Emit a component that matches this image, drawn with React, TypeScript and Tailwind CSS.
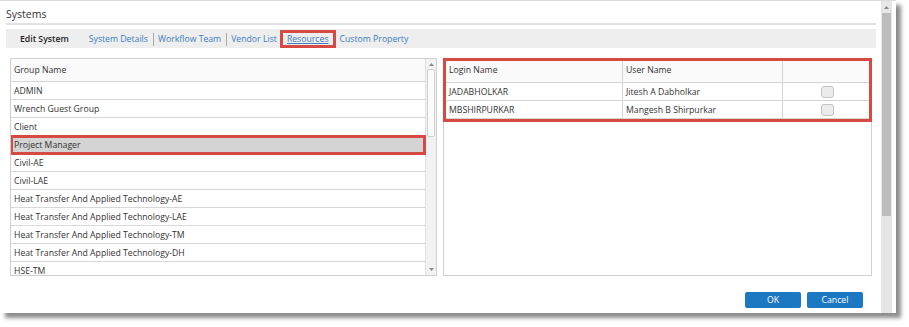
import React from 'react';

const groups = [
  'ADMIN',
  'Wrench Guest Group',
  'Client',
  'Project Manager',
  'Civil-AE',
  'Civil-LAE',
  'Heat Transfer And Applied Technology-AE',
  'Heat Transfer And Applied Technology-LAE',
  'Heat Transfer And Applied Technology-TM',
  'Heat Transfer And Applied Technology-DH',
  'HSE-TM',
];

const users = [
  { login: 'JADABHOLKAR', name: 'Jitesh A Dabholkar' },
  { login: 'MBSHIRPURKAR', name: 'Mangesh B Shirpurkar' },
];

const tabs = ['System Details', 'Workflow Team', 'Vendor List'];

const UpArrow = () => (
  <svg width="7" height="5" viewBox="0 0 7 5" className="mx-auto">
    <path d="M3.5 1 L6 4 L1 4 Z" fill="#8a8a8a" />
  </svg>
);

const DownArrow = () => (
  <svg width="7" height="5" viewBox="0 0 7 5" className="mx-auto">
    <path d="M1 1 L6 1 L3.5 4 Z" fill="#8a8a8a" />
  </svg>
);

const App = () => {
  return (
    <div className="w-[909px] h-[327px] bg-white" style={{ fontFamily: '"Open Sans", sans-serif' }}>
      <div className="w-[896px] h-[313px] bg-white border-t border-[#dcdcdc] shadow-[5px_5px_4px_rgba(0,0,0,0.45)] flex">
        {/* main content */}
        <div className="flex-1 pl-[6px] pr-[5px] flex flex-col">
          <div className="h-[24px] border-b-2 border-[#e2e2e2] flex items-center">
            <span className="text-[10.5px] text-[#333] leading-none pt-[5px]">Systems</span>
          </div>

          {/* tab bar */}
          <div className="mt-[4px] h-[19px] bg-[#eeeeee] flex items-center text-[8.7px] leading-none">
            <span className="ml-[14px] pt-[1px] text-[#1e1e1e] font-semibold">Edit System</span>
            <div className="ml-[20px] pt-[1px] flex items-center text-[#3b7bc0]">
              {tabs.map((t, i) => (
                <React.Fragment key={t}>
                  <span>{t}</span>
                  {i < tabs.length - 1 && <span className="ml-[5px] mr-[4px] w-px h-[13px] bg-[#a8a8a8]" />}
                </React.Fragment>
              ))}
            </div>
            <span className="ml-[3px] h-[18px] px-[7px] pt-[1px] flex items-center outline-[3px] outline-solid outline-[#d64a43] -outline-offset-[3px]">
              <span className="underline text-[#3b7bc0]">Resources</span>
            </span>
            <span className="ml-[4px] pt-[1px] text-[#3b7bc0]">Custom Property</span>
          </div>

          {/* panels */}
          <div className="mt-[10px] flex gap-[6px] pl-[4px] pr-[4px]">
            {/* left */}
            <div className="w-[427px] h-[218px] border border-[#d0d0d0] flex overflow-hidden">
              <div className="flex-1 text-[8.7px] text-[#333]">
                <div className="h-[23px] flex items-center pl-[3px] pt-[2px] border-b border-[#d8d8d8] bg-[#fafafa]">Group Name</div>
                {groups.map((g) =>
                  g === 'Project Manager' ? (
                    <div
                      key={g}
                      className="h-[18px] flex items-center pl-[3px] pt-[3px] bg-[#d4d4d4] border-b border-[#d8d8d8] outline-[3px] outline-solid outline-[#d64a43] -outline-offset-[2px] relative"
                    >
                      {g}
                    </div>
                  ) : (
                    <div key={g} className="h-[18px] flex items-center pl-[3px] pt-[3px] border-b border-[#d8d8d8]">
                      {g}
                    </div>
                  )
                )}
              </div>
              <div className="w-[11px] bg-[#f2f2f2] border-l border-[#e0e0e0] flex flex-col pt-[3px] pb-[3px]">
                <UpArrow />
                <div className="mt-[2px] mx-[1px] h-[68px] bg-[#fbfbfb] border border-[#cfcfcf] rounded-[2px]" />
                <div className="flex-1" />
                <DownArrow />
              </div>
            </div>

            {/* right */}
            <div className="flex-1 h-[218px] border border-[#d0d0d0] relative">
              <div className="outline-[3px] outline-solid outline-[#d64a43] -outline-offset-[2px] text-[8.7px] text-[#333] pb-[2px]">
                <div className="h-[24px] flex border-b border-[#d4d4d4] bg-[#fafafa]">
                  <div className="w-[179px] pl-[5px] pt-[1px] flex items-center border-r border-[#d4d4d4]">Login Name</div>
                  <div className="w-[160px] pl-[3px] pt-[1px] flex items-center border-r border-[#d4d4d4]">User Name</div>
                  <div className="flex-1" />
                </div>
                {users.map((u) => (
                  <div key={u.login} className="h-[18px] flex border-b border-[#d4d4d4]">
                    <div className="w-[179px] pl-[5px] pt-[2px] flex items-center border-r border-[#d4d4d4]">{u.login}</div>
                    <div className="w-[160px] pl-[3px] pt-[2px] flex items-center border-r border-[#d4d4d4]">{u.name}</div>
                    <div className="flex-1 flex items-center justify-center">
                      <span className="w-[13px] h-[12px] rounded-[3px] border border-[#c4c4c4] bg-[#ececec]" />
                    </div>
                  </div>
                ))}
              </div>
            </div>
          </div>

          {/* buttons */}
          <div className="mt-[16px] flex justify-end gap-[6px] pr-[13px]">
            <button className="w-[56px] h-[16px] bg-[#1c78c3] rounded-[2px] text-white text-[8.7px] leading-none pt-[1px]">OK</button>
            <button className="w-[56px] h-[16px] bg-[#1c78c3] rounded-[2px] text-white text-[8.7px] leading-none pt-[1px]">Cancel</button>
          </div>
        </div>

        {/* page scrollbar */}
        <div className="w-[11px] mr-[4px] bg-[#e6e6e6] flex flex-col pt-[4px]">
          <UpArrow />
          <div className="mt-[3px] mx-[1px] h-[203px] bg-[#bdbdbd]" />
        </div>
      </div>
    </div>
  );
};

export default App;
